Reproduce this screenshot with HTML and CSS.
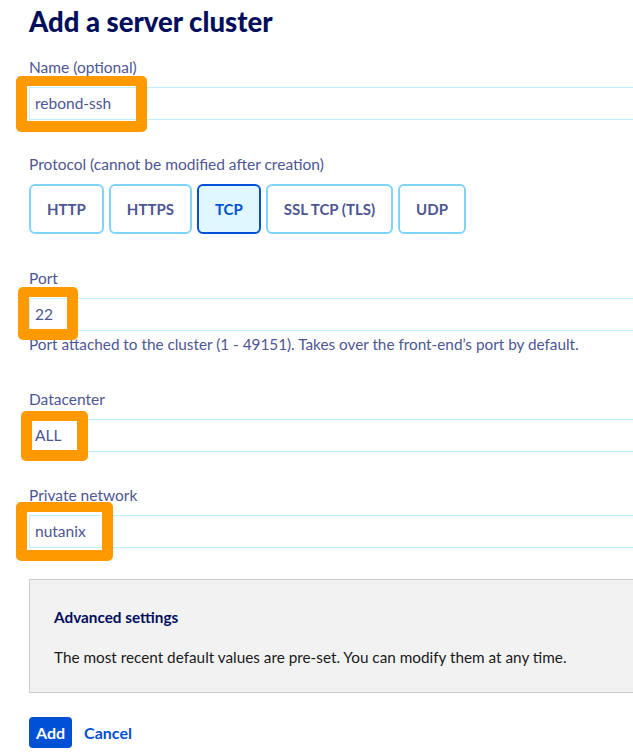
FILE: index.html
```html
<!DOCTYPE html>
<html lang="en">
<head>
<meta charset="utf-8">
<title>Add a server cluster</title>
<link rel="stylesheet" href="styles.css">
</head>
<body>
<div class="page">
  <h1 class="title">Add a server cluster</h1>

  <div class="field">
    <label class="label">Name (optional)</label>
    <div class="input-wrap">
      <div class="input">rebond-ssh</div>
      <span class="highlight hl-name"></span>
    </div>
  </div>

  <div class="field">
    <label class="label">Protocol (cannot be modified after creation)</label>
    <div class="tiles">
      <button class="tile">HTTP</button>
      <button class="tile">HTTPS</button>
      <button class="tile tile-active">TCP</button>
      <button class="tile">SSL TCP (TLS)</button>
      <button class="tile">UDP</button>
    </div>
  </div>

  <div class="field field-help">
    <label class="label">Port</label>
    <div class="input-wrap">
      <div class="input">22</div>
      <span class="highlight hl-port"></span>
    </div>
    <p class="help">Port attached to the cluster (1 - 49151). Takes over the front-end’s port by default.</p>
  </div>

  <div class="field field-dc">
    <label class="label">Datacenter</label>
    <div class="input-wrap">
      <div class="input">ALL</div>
      <span class="highlight hl-dc"></span>
    </div>
  </div>

  <div class="field field-last">
    <label class="label">Private network</label>
    <div class="input-wrap">
      <div class="input">nutanix</div>
      <span class="highlight hl-pn"></span>
    </div>
  </div>

  <div class="advanced">
    <h2 class="advanced-title">Advanced settings</h2>
    <p class="advanced-text">The most recent default values are pre-set. You can modify them at any time.</p>
  </div>

  <div class="actions">
    <button class="btn-primary">Add</button>
    <button class="btn-link">Cancel</button>
  </div>
</div>
</body>
</html>
```

FILE: styles.css
```css
html, body {
  margin: 0;
  padding: 0;
  background: #fff;
  overflow: hidden;
}
body {
  font-family: "Source Sans Pro", Lato, "Open Sans", sans-serif;
  color: #4d5693;
}
.page {
  padding: 5px 0 0 29px;
  width: 700px;
}
.title {
  margin: 0 0 18px 0;
  font-size: 27.5px;
  line-height: 34px;
  font-weight: 900;
  color: #000e5c;
}
.field {
  margin-bottom: 34px;
}
.field-help {
  margin-bottom: 35px;
}
.field-dc {
  margin-bottom: 33px;
}
.field-last {
  margin-bottom: 0;
}
.label {
  display: block;
  font-size: 15.5px;
  line-height: 20px;
  margin-bottom: 10px;
}
.input-wrap {
  position: relative;
}
.input {
  box-sizing: border-box;
  height: 33px;
  width: 680px;
  border: 1px solid #bef1ff;
  padding: 0 5px;
  font-size: 15.5px;
  line-height: 31px;
  color: #4d5693;
  background: #fff;
}
.highlight {
  position: absolute;
  box-sizing: border-box;
  border: 11px solid #ff9900;
  border-top-width: 10px;
  border-radius: 5px;
}
.hl-name { left: -13px; top: -11px; width: 131px; height: 56px; }
.hl-port { left: -11px; top: -11px; width: 60px; height: 53px; }
.hl-dc { left: -8px; top: -8px; width: 67px; height: 50px; }
.hl-pn { left: -13px; top: -13px; width: 97px; height: 59px; }
.help {
  margin: 3px 0 0 0;
  font-size: 15.3px;
  line-height: 20px;
}
.tiles {
  display: flex;
  gap: 5px;
}
.tile {
  box-sizing: border-box;
  height: 50px;
  padding: 0 16px;
  border: 2px solid #80d4fb;
  border-radius: 6px;
  background: #fff;
  font-family: inherit;
  font-size: 15px;
  font-weight: 700;
  color: #4d5693;
}
.tile-active {
  background: #e0f7ff;
  border-color: #0050d7;
  color: #0050d7;
}
.advanced {
  box-sizing: border-box;
  margin-top: 31px;
  height: 114px;
  width: 680px;
  border: 1px solid #cccccc;
  background: #f2f2f2;
  padding: 27px 24px 0 24px;
}
.advanced-title {
  margin: 0 0 20px 0;
  font-size: 15.3px;
  line-height: 20px;
  font-weight: 700;
  color: #000e5c;
}
.advanced-text {
  margin: 0;
  font-size: 15.3px;
  line-height: 20px;
  color: #1a1a1a;
}
.actions {
  margin-top: 24px;
  display: flex;
  align-items: center;
  gap: 12px;
}
.btn-primary {
  height: 31px;
  padding: 0 7px;
  border: none;
  border-radius: 4px;
  background: #0050d7;
  color: #fff;
  font-family: inherit;
  font-size: 16px;
  font-weight: 700;
}
.btn-link {
  border: none;
  background: none;
  padding: 0;
  color: #0050d7;
  font-family: inherit;
  font-size: 16px;
  font-weight: 700;
}
```
